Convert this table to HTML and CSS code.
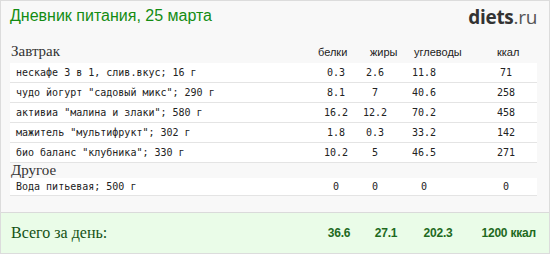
FILE: index.html
```html
<!DOCTYPE html>
<html lang="ru">
<head>
<meta charset="utf-8">
<title>Дневник питания</title>
<link rel="stylesheet" href="styles.css">
</head>
<body>
<div class="card">
  <header class="top">
    <h1 class="title">Дневник питания, 25 марта</h1>
    <div class="logo"><b>diets</b>.ru</div>
  </header>
  <div class="meal-head">
    <div class="meal">Завтрак</div>
    <div class="h h1">белки</div>
    <div class="h h2">жиры</div>
    <div class="h h3">углеводы</div>
    <div class="h h4">ккал</div>
  </div>
  <div class="row"><div class="name">нескафе 3 в 1, слив.вкус; 16 г</div><div class="n">0.3</div><div class="n">2.6</div><div class="n c3">11.8</div><div class="n c4">71</div></div>
  <div class="row"><div class="name">чудо йогурт "садовый микс"; 290 г</div><div class="n">8.1</div><div class="n">7</div><div class="n c3">40.6</div><div class="n c4">258</div></div>
  <div class="row"><div class="name">активиа "малина и злаки"; 580 г</div><div class="n">16.2</div><div class="n">12.2</div><div class="n c3">70.2</div><div class="n c4">458</div></div>
  <div class="row"><div class="name">мажитель "мультифрукт"; 302 г</div><div class="n">1.8</div><div class="n">0.3</div><div class="n c3">33.2</div><div class="n c4">142</div></div>
  <div class="row"><div class="name">био баланс "клубника"; 330 г</div><div class="n">10.2</div><div class="n">5</div><div class="n c3">46.5</div><div class="n c4">271</div></div>
  <div class="meal-head meal-head-2">
    <div class="meal">Другое</div>
  </div>
  <div class="row row-short"><div class="name">Вода питьевая; 500 г</div><div class="n">0</div><div class="n">0</div><div class="n c3">0</div><div class="n c4">0</div></div>
  <footer class="total">
    <div class="total-label">Всего за день:</div>
    <div class="tn">36.6</div>
    <div class="tn">27.1</div>
    <div class="tn">202.3</div>
    <div class="tn tk">1200 ккал</div>
  </footer>
</div>
</body>
</html>
```
FILE: styles.css
```css
html, body {
  margin: 0;
  padding: 0;
}
body {
  width: 550px;
  height: 254px;
  overflow: hidden;
}
.card {
  box-sizing: border-box;
  width: 550px;
  height: 254px;
  border: 1px solid #dcdcdc;
  background: #f8f8f8;
  display: flex;
  flex-direction: column;
}
.top {
  display: flex;
  justify-content: space-between;
  align-items: flex-start;
  padding: 4px 12px 0 9px;
  height: 35px;
}
.title {
  margin: 0;
  font-family: "Liberation Sans", Arial, sans-serif;
  font-weight: normal;
  font-size: 16px;
  line-height: 22px;
  color: #138c13;
}
.logo {
  font-family: "Open Sans", sans-serif;
  font-size: 19px;
  line-height: 24px;
  color: #555;
  letter-spacing: -0.3px;
}
.logo b {
  font-weight: 700;
  color: #333;
}
.meal-head, .row {
  display: grid;
  grid-template-columns: 307px 38px 40px 74px 68px;
}
.meal-head {
  margin: 0 12px 0 9px;
  height: 23px;
  align-items: center;
}
.meal-head-2 {
  height: 15px;
  align-items: center;
}
.meal {
  font-family: "Liberation Serif", serif;
  font-size: 15px;
  line-height: 15px;
  color: #333;
  padding-left: 1px;
}
.h {
  font-family: "Liberation Sans", Arial, sans-serif;
  font-size: 11px;
  color: #222;
}
.h1 { padding-left: 1px; }
.h2 { padding-left: 15px; }
.h3 { padding-left: 19px; }
.h4 { padding-left: 28px; }
.row {
  margin: 0 12px 0 9px;
  background: #fff;
  border-bottom: 1px solid #e4e4e4;
  height: 19px;
  align-items: center;
  font-family: "DejaVu Sans Mono", monospace;
  font-size: 10px;
  color: #222;
}
.row-short {
  height: 17px;
}
.name {
  padding-left: 6px;
}
.n {
  text-align: center;
}
.c3 {
  padding-right: 16px;
}
.c4 {
  padding-left: 6px;
}
.total {
  margin-top: auto;
  height: 40px;
  background: #eafce8;
  border-top: 1px solid #dadada;
  padding: 0 12px 0 9px;
  display: grid;
  grid-template-columns: 311px 36px 58px 46px 76px;
  align-items: center;
}
.total-label {
  font-family: "Liberation Serif", serif;
  font-size: 16px;
  color: #145214;
  padding-left: 1px;
}
.tn {
  font-family: "Liberation Sans", Arial, sans-serif;
  font-weight: bold;
  font-size: 12px;
  color: #1e6a1e;
  text-align: center;
  letter-spacing: -0.2px;
}
.tk {
  text-align: right;
  padding-right: 1px;
}
```
